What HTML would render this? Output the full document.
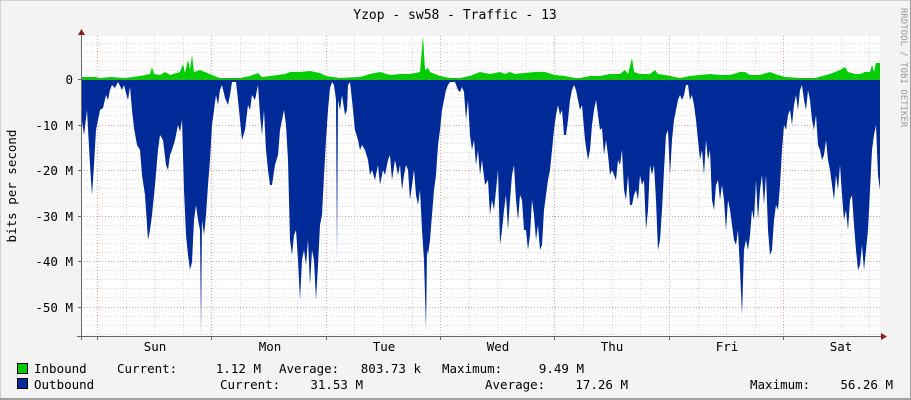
<!DOCTYPE html>
<html><head><meta charset="utf-8"><style>
html,body{margin:0;padding:0;background:#f3f3f3;}
svg{display:block;}
text{font-family:"DejaVu Sans Mono","Liberation Mono",monospace;fill:#000;}
</style></head><body>
<svg width="911" height="400" viewBox="0 0 911 400" xmlns="http://www.w3.org/2000/svg">
<rect x="0" y="0" width="911" height="400" fill="#f3f3f3"/>
<line x1="0.5" y1="0" x2="0.5" y2="400" stroke="#cfcfcf"/>
<line x1="0" y1="0.5" x2="911" y2="0.5" stroke="#cfcfcf"/>
<line x1="910.5" y1="0" x2="910.5" y2="400" stroke="#9f9f9f"/>
<line x1="0" y1="399" x2="911" y2="399" stroke="#9f9f9f" stroke-width="2"/>
<rect x="81" y="36" width="799" height="300" fill="#fff"/>
<g stroke="#d8d8d8" stroke-dasharray="1,2" stroke-width="1">
<path d="M81,43.5H880M81,52.5H880M81,61.5H880M81,70.5H880M81,88.5H880M81,97.5H880M81,106.5H880M81,115.5H880M81,134.5H880M81,143.5H880M81,152.5H880M81,161.5H880M81,179.5H880M81,188.5H880M81,197.5H880M81,206.5H880M81,225.5H880M81,234.5H880M81,243.5H880M81,252.5H880M81,270.5H880M81,279.5H880M81,288.5H880M81,297.5H880M81,316.5H880M81,325.5H880M81,334.5H880"/>
<path d="M126.5,36V336M154.5,36V336M183.5,36V336M240.5,36V336M269.5,36V336M297.5,36V336M354.5,36V336M383.5,36V336M412.5,36V336M469.5,36V336M497.5,36V336M526.5,36V336M583.5,36V336M612.5,36V336M640.5,36V336M698.5,36V336M726.5,36V336M755.5,36V336M812.5,36V336M841.5,36V336M869.5,36V336"/>
</g>
<g stroke="#e8a0a0" stroke-dasharray="1,2" stroke-width="1">
<path d="M81,125.5H880M81,170.5H880M81,216.5H880M81,261.5H880M81,307.5H880"/>
<path d="M97.5,36V336M211.5,36V336M326.5,36V336M440.5,36V336M554.5,36V336M669.5,36V336M783.5,36V336"/>
</g>
<path fill="#00cc00" d="M81,80 L81,77 95,77 100,78 110,77 125,78 140,76 150,74 152,67 154,74 160,75 165,72 170,75 180,72 183,64 185,73 188,60 190,70 192,55 194,72 200,70 205,72 212,75 220,78 240,78 250,76 258,73 262,77 270,76 285,74 290,72 300,72 310,71 320,73 326,76 340,78 360,77 370,74 380,72 390,75 400,74 410,74 420,72 423,36 425,70 428,68 430,72 440,76 450,78 460,78 470,76 480,72 490,74 500,72 505,74 510,72 515,74 525,73 535,72 545,72 555,75 565,76 575,78 580,78 590,76 600,76 605,75 610,74 620,74 625,70 628,74 632,58 634,72 640,74 650,74 655,70 658,74 665,75 680,78 690,76 700,75 710,74 720,75 730,75 740,72 745,72 750,75 760,75 770,72 775,74 785,77 800,78 815,78 830,74 840,70 845,67 848,72 855,74 860,74 865,72 870,72 872,65 874,72 876,63 880,63 880,80 Z"/>
<path fill="#002a97" d="M81,80 L81,115 84,135 87,110 90,165 92,195 94,165 96,130 98,120 100,110 103,108 106,95 108,100 110,90 112,85 115,88 118,82 122,90 124,85 126,93 128,100 130,87 132,110 134,128 137,145 140,150 142,175 145,195 148,240 150,230 152,215 155,185 158,150 160,135 163,140 166,165 168,170 170,155 172,150 175,140 178,125 180,132 182,120 184,190 186,235 188,255 190,270 192,262 194,220 196,205 198,220 200,230 201,336 202,220 204,235 206,215 208,185 210,160 212,125 214,110 216,95 218,105 220,90 222,85 225,98 228,105 230,95 232,82 236,82 238,100 240,120 242,140 245,130 248,105 250,110 252,95 255,100 258,85 260,115 262,135 264,110 266,150 268,170 270,185 272,185 275,165 278,155 280,130 282,120 284,110 286,125 288,160 290,240 292,255 294,235 296,230 298,260 300,300 302,260 304,250 306,265 308,240 310,285 312,250 314,260 316,300 318,265 320,225 322,215 324,175 326,140 328,110 330,88 332,82 334,85 336,100 337,260 338,100 340,110 342,95 345,115 347,110 348,85 350,82 352,100 355,130 358,140 360,150 362,145 365,150 368,160 370,175 372,170 375,180 378,165 380,185 383,170 385,175 388,160 390,155 392,180 395,160 398,175 400,165 402,190 404,175 406,165 408,170 410,200 412,185 414,170 416,195 418,205 420,190 422,230 424,260 426,330 427,250 428,255 430,240 432,215 434,190 436,175 438,145 440,130 442,110 444,100 446,90 448,85 450,82 455,82 458,90 460,92 462,87 464,92 466,120 468,100 470,135 472,150 474,140 476,165 478,150 480,175 482,160 485,185 488,180 490,215 492,200 494,210 496,190 498,170 500,245 502,230 504,210 506,195 508,230 510,200 512,175 514,165 516,200 518,220 520,195 522,200 524,230 526,230 528,250 530,235 532,200 534,215 536,240 538,225 540,250 542,245 544,210 546,195 548,180 550,170 552,150 554,130 556,115 558,105 560,115 562,110 564,135 566,135 568,120 570,100 572,90 574,85 576,90 578,100 580,110 582,105 585,140 588,160 590,150 592,125 594,110 596,100 598,115 600,130 602,128 604,155 606,140 608,155 610,175 612,170 614,175 616,180 618,160 620,165 622,150 624,190 626,200 628,175 630,205 632,205 634,195 636,190 638,200 640,175 642,185 644,180 646,230 648,210 650,165 652,175 654,165 656,200 658,250 660,240 662,210 664,170 666,135 668,130 670,175 672,140 674,120 676,110 678,100 680,95 682,100 684,95 686,85 688,85 690,100 692,95 694,105 696,120 698,140 700,160 702,150 704,175 706,140 708,160 710,150 712,200 714,210 716,185 718,180 720,200 722,185 724,200 726,230 728,200 730,210 732,225 734,240 736,245 738,230 740,270 742,315 744,250 746,240 748,250 750,235 752,210 754,220 756,180 758,220 760,190 762,175 764,205 766,175 768,230 770,255 772,250 774,220 776,205 778,210 780,185 782,150 784,125 786,130 788,115 790,110 792,125 794,105 796,95 798,110 800,90 802,85 804,100 806,110 808,90 810,100 812,120 814,130 816,115 818,145 820,150 822,160 824,155 826,140 828,160 830,170 832,185 834,200 836,175 838,190 840,165 842,195 844,220 846,210 848,230 850,200 852,195 854,225 856,250 858,270 860,265 862,245 864,270 866,250 868,230 870,190 872,150 874,135 876,125 878,175 880,190 880,80 Z"/>
<line x1="81" y1="79.5" x2="880" y2="79.5" stroke="#c06060" stroke-width="0.6" stroke-dasharray="1,2"/>
<line x1="81.5" y1="30" x2="81.5" y2="340" stroke="#666"/>
<line x1="77" y1="336.5" x2="884" y2="336.5" stroke="#666"/>
<path d="M78,35 L81.5,29 85,35 Z" fill="#8b1a1a"/>
<path d="M881,333 L887,336.5 881,340 Z" fill="#8b1a1a"/>
<g stroke="#666">
<path d="M78,79.5H81M78,125.5H81M78,170.5H81M78,216.5H81M78,261.5H81M78,307.5H81"/>
<path d="M97.5,336V340M211.5,336V340M326.5,336V340M440.5,336V340M554.5,336V340M669.5,336V340M783.5,336V340"/>
</g>
<text x="455" y="19" text-anchor="middle" font-size="13">Yzop - sw58 - Traffic - 13</text>
<g font-size="12.5" text-anchor="end">
<text x="73" y="84">0</text>
<text x="73" y="130">-10 M</text>
<text x="73" y="175">-20 M</text>
<text x="73" y="221">-30 M</text>
<text x="73" y="266">-40 M</text>
<text x="73" y="312">-50 M</text>
</g>
<text transform="translate(16,186) rotate(-90)" text-anchor="middle" font-size="12.5">bits per second</text>
<text transform="translate(901,8) rotate(90)" font-size="9" style="fill:#999">RRDTOOL / TOBI OETIKER</text>
<g font-size="12.5" text-anchor="middle">
<text x="155" y="351">Sun</text>
<text x="270" y="351">Mon</text>
<text x="384" y="351">Tue</text>
<text x="498" y="351">Wed</text>
<text x="612" y="351">Thu</text>
<text x="727" y="351">Fri</text>
<text x="841" y="351">Sat</text>
</g>
<rect x="17.5" y="363.5" width="10" height="10" fill="#00cc00" stroke="#000"/>
<rect x="17.5" y="378.5" width="10" height="10" fill="#002a97" stroke="#000"/>
<g font-size="12.5">
<text x="34" y="373">Inbound</text>
<text x="117" y="373">Current:</text>
<text x="261" y="373" text-anchor="end">1.12 M</text>
<text x="279" y="373">Average:</text>
<text x="421" y="373" text-anchor="end">803.73 k</text>
<text x="442" y="373">Maximum:</text>
<text x="584" y="373" text-anchor="end">9.49 M</text>
<text x="34" y="389">Outbound</text>
<text x="220" y="389">Current:</text>
<text x="363" y="389" text-anchor="end">31.53 M</text>
<text x="485" y="389">Average:</text>
<text x="628" y="389" text-anchor="end">17.26 M</text>
<text x="750" y="389">Maximum:</text>
<text x="893" y="389" text-anchor="end">56.26 M</text>
</g>
</svg>
</body></html>
